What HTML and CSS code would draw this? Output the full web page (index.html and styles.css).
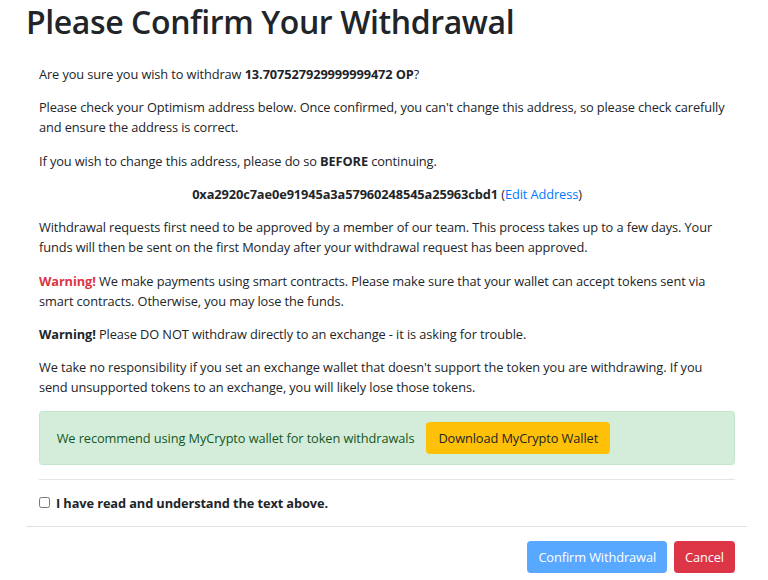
FILE: index.html
```html
<!DOCTYPE html>
<html>
<head>
<meta charset="utf-8">
<link rel="stylesheet" href="styles.css">
</head>
<body>
<div class="modal">
  <div class="modal-header">
    <h1 class="title">Please Confirm Your Withdrawal</h1>
  </div>
  <div class="modal-body">
    <p>Are you sure you wish to withdraw <b>13.707527929999999472 OP</b>?</p>
    <p>Please check your Optimism address below. Once confirmed, you can't change this address, so please check carefully and ensure the address is correct.</p>
    <p>If you wish to change this address, please do so <b>BEFORE</b> continuing.</p>
    <p class="center"><b>0xa2920c7ae0e91945a3a57960248545a25963cbd1</b> (<a class="link" href="#">Edit Address</a>)</p>
    <p>Withdrawal requests first need to be approved by a member of our team. This process takes up to a few days. Your funds will then be sent on the first Monday after your withdrawal request has been approved.</p>
    <p><b class="danger">Warning!</b> We make payments using smart contracts. Please make sure that your wallet can accept tokens sent via smart contracts. Otherwise, you may lose the funds.</p>
    <p><b>Warning!</b> Please DO NOT withdraw directly to an exchange - it is asking for trouble.</p>
    <p>We take no responsibility if you set an exchange wallet that doesn't support the token you are withdrawing. If you send unsupported tokens to an exchange, you will likely lose those tokens.</p>
    <div class="alert">
      <span>We recommend using MyCrypto wallet for token withdrawals</span>
      <a class="btn btn-warning" href="#">Download MyCrypto Wallet</a>
    </div>
    <hr class="sep">
    <label class="check"><input type="checkbox" class="box"> <span>I have read and understand the text above.</span></label>
  </div>
  <div class="modal-footer">
    <button class="btn btn-primary" disabled>Confirm Withdrawal</button>
    <button class="btn btn-danger">Cancel</button>
  </div>
</div>
</body>
</html>
```
FILE: styles.css
```css
* { box-sizing: border-box; }
body {
  margin: 0;
  font-family: "Open Sans", "Noto Sans", sans-serif;
  font-size: 12.8px;
  line-height: 20px;
  letter-spacing: -0.1px;
  color: #212529;
  background: #fff;
}
.modal {
  width: 721px;
  margin-left: 26px;
}
.modal-header {
  padding-top: 2px;
}
.title {
  margin: 0;
  font-size: 32px;
  line-height: 40px;
  font-weight: 600;
  letter-spacing: -0.4px;
}
.modal-body {
  padding: 22px 12px 0 13px;
}
p {
  margin: 0 3px 13.33px 0;
}
b { font-weight: 700; }
.center { text-align: center; margin-right: 0; }
.link { color: #007bff; text-decoration: none; }
.danger { color: #dc3545; }
.alert {
  display: flex;
  align-items: center;
  gap: 12px;
  padding: 10px 16.67px;
  background: #d4edda;
  border: 1px solid #c3e6cb;
  border-radius: 3.33px;
  color: #155724;
}
.btn {
  display: inline-block;
  font-family: inherit;
  font-size: 12.8px;
  line-height: 20px;
  letter-spacing: inherit;
  padding: 5px 10px;
  border: 1px solid transparent;
  border-radius: 3.33px;
  text-decoration: none;
  cursor: pointer;
}
.btn-warning {
  background: #ffc107;
  border-color: #ffc107;
  color: #212529;
  padding: 5px 11px;
}
.btn-primary {
  background: #007bff;
  border-color: #007bff;
  color: #fff;
}
.btn-primary:disabled { opacity: 0.65; }
.btn-danger {
  background: #dc3545;
  border-color: #dc3545;
  color: #fff;
}
.sep {
  margin: 14px 0 13.33px;
  border: 0;
  border-top: 1px solid rgba(0,0,0,0.1);
}
.check {
  display: flex;
  align-items: center;
  gap: 6px;
  font-weight: 700;
  margin-bottom: 13.33px;
  line-height: 20px;
}
.box {
  margin: 0;
  width: 11px;
  height: 11px;
}
.modal-footer {
  display: flex;
  justify-content: flex-end;
  gap: 7px;
  border-top: 1px solid #dee2e6;
  padding: 14px 12px 13px 13px;
}
```
